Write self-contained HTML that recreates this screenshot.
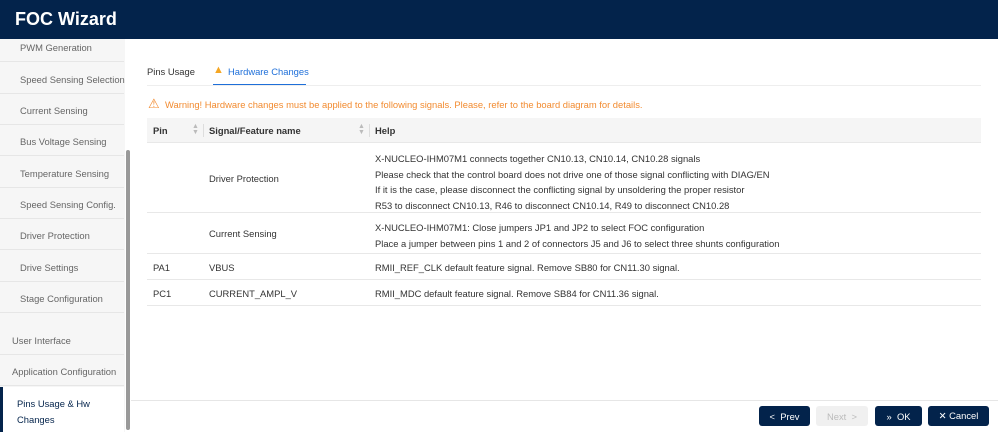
<!DOCTYPE html><html><head><style>
*{box-sizing:border-box;margin:0;padding:0}
body{width:998px;height:432px;overflow:hidden;font-family:"Liberation Sans",sans-serif;background:#fff;position:relative;color:#333}
.hdr{position:absolute;left:0;top:0;width:998px;height:39px;background:#03234b;color:#fff;font-size:18px;font-weight:bold;padding:9px 0 0 15px}
.side{position:absolute;left:0;top:39px;width:125px;height:393px;background:#f6f6f6;overflow:hidden}
.it{position:absolute;left:0;width:124px;height:31px;border-bottom:1px solid #e6e6e6;font-size:9.4px;color:#666;padding-left:20px;line-height:34px;white-space:nowrap}
.sb{position:absolute;left:126px;top:150px;width:4px;height:280px;background:#999;border-radius:2px}
.t{position:absolute;font-size:9.4px;white-space:nowrap}
.tbl{position:absolute;left:147px;width:834px;border-bottom:1px solid #e8e8e8}
.btn{position:absolute;top:406px;height:20px;border-radius:3px;background:#03234b;color:#fff;font-size:9.4px;display:flex;align-items:center;justify-content:center}
</style></head><body>
<div class="hdr">FOC Wizard</div>
<div class="side">
<div class="it" style="top:-8px">PWM Generation</div>
<div class="it" style="top:24px">Speed Sensing Selection</div>
<div class="it" style="top:55px">Current Sensing</div>
<div class="it" style="top:86px">Bus Voltage Sensing</div>
<div class="it" style="top:118px">Temperature Sensing</div>
<div class="it" style="top:149px">Speed Sensing Config.</div>
<div class="it" style="top:180px">Driver Protection</div>
<div class="it" style="top:212px">Drive Settings</div>
<div class="it" style="top:243px">Stage Configuration</div>
<div class="it" style="top:285px;padding-left:12px">User Interface</div>
<div class="it" style="top:316px;padding-left:12px">Application Configuration</div>
<div style="position:absolute;left:0;top:348px;width:124px;height:45px;background:#fff;border-left:3px solid #03234b;padding:9px 0 0 14px;font-size:9.4px;line-height:16px;color:#03234b">Pins Usage &amp; Hw<br>Changes</div>
</div>
<div class="sb"></div>
<div class="t" style="left:147px;top:66px;color:#333">Pins Usage</div>
<div class="t" style="left:213px;top:64px;color:#f5a623;font-size:11px">▲</div>
<div class="t" style="left:228px;top:66px;color:#1e6fd9">Hardware Changes</div>
<div style="position:absolute;left:213px;top:84px;width:93px;height:2px;background:#1e6fd9"></div>
<div style="position:absolute;left:147px;top:85px;width:834px;height:1px;background:#eee"></div>
<div class="t" style="left:148px;top:96px;color:#f28b30;font-size:13px">⚠</div>
<div class="t" style="left:165px;top:99px;color:#f28b30">Warning! Hardware changes must be applied to the following signals. Please, refer to the board diagram for details.</div>
<div class="tbl" style="top:118px;height:25px;background:#f5f5f5"></div>
<div class="t" style="left:153px;top:125px;font-weight:bold">Pin</div>
<div class="t" style="left:192px;top:124px;color:#bbb;font-size:7px;line-height:6px">▲<br>▼</div>
<div style="position:absolute;left:203px;top:124px;width:1px;height:13px;background:#ddd"></div>
<div class="t" style="left:209px;top:125px;font-weight:bold">Signal/Feature name</div>
<div class="t" style="left:358px;top:124px;color:#bbb;font-size:7px;line-height:6px">▲<br>▼</div>
<div style="position:absolute;left:369px;top:124px;width:1px;height:13px;background:#ddd"></div>
<div class="t" style="left:375px;top:125px;font-weight:bold">Help</div>
<div class="tbl" style="top:143px;height:70px"></div>
<div class="t" style="left:209px;top:173px">Driver Protection</div>
<div class="t" style="left:375px;top:151px;line-height:15.5px">X-NUCLEO-IHM07M1 connects together CN10.13, CN10.14, CN10.28 signals<br>Please check that the control board does not drive one of those signal conflicting with DIAG/EN<br>If it is the case, please disconnect the conflicting signal by unsoldering the proper resistor<br>R53 to disconnect CN10.13, R46 to disconnect CN10.14, R49 to disconnect CN10.28</div>
<div class="tbl" style="top:213px;height:41px"></div>
<div class="t" style="left:209px;top:228px">Current Sensing</div>
<div class="t" style="left:375px;top:220px;line-height:15.5px">X-NUCLEO-IHM07M1: Close jumpers JP1 and JP2 to select FOC configuration<br>Place a jumper between pins 1 and 2 of connectors J5 and J6 to select three shunts configuration</div>
<div class="tbl" style="top:254px;height:26px"></div>
<div class="t" style="left:153px;top:262px">PA1</div><div class="t" style="left:209px;top:262px">VBUS</div>
<div class="t" style="left:375px;top:262px">RMII_REF_CLK default feature signal. Remove SB80 for CN11.30 signal.</div>
<div class="tbl" style="top:280px;height:26px"></div>
<div class="t" style="left:153px;top:288px">PC1</div><div class="t" style="left:209px;top:288px">CURRENT_AMPL_V</div>
<div class="t" style="left:375px;top:288px">RMII_MDC default feature signal. Remove SB84 for CN11.36 signal.</div>
<div style="position:absolute;left:131px;top:400px;width:867px;height:1px;background:#e6e6e6"></div>
<div class="btn" style="left:759px;width:51px">&lt;&nbsp; Prev</div>
<div class="btn" style="left:816px;width:52px;background:#f0f0f0;color:#bbb">Next &nbsp;&gt;</div>
<div class="btn" style="left:875px;width:47px">»&nbsp; OK</div>
<div class="btn" style="left:928px;width:61px">✕ Cancel</div>
</body></html>
